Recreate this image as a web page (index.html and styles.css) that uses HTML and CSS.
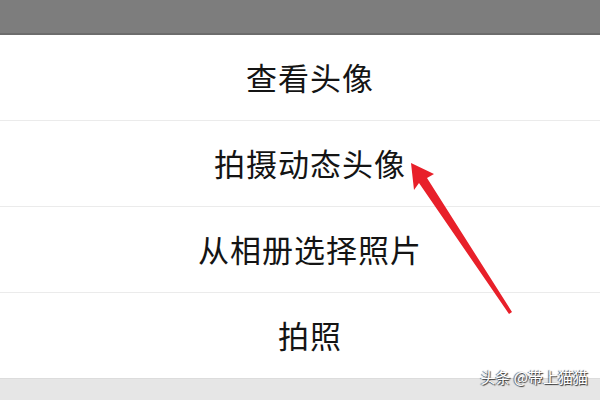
FILE: index.html
```html
<!DOCTYPE html>
<html lang="zh-CN">
<head>
  <meta charset="UTF-8">
  <meta name="viewport" content="width=device-width, initial-scale=1.0">
  <title>头像</title>
  <link rel="stylesheet" href="styles.css">
</head>
<body>
  <div class="screen">
    <div class="mask"></div>
    <ul class="sheet">
      <li class="sheet-item">查看头像</li>
      <li class="sheet-item">拍摄动态头像</li>
      <li class="sheet-item">从相册选择照片</li>
      <li class="sheet-item">拍照</li>
    </ul>
    <div class="gap"></div>

    <svg class="arrow" width="600" height="400" viewBox="0 0 600 400">
      <polygon fill="#e8202a" points="411,163 434,174 427,178 512,312 509,314 419,183 414,190"/>
    </svg>
    <div class="watermark">头条 @带上猫猫</div>
  </div>
</body>
</html>
```

FILE: styles.css
```css
body {
  margin: 0;
  padding: 0;
  font-family: "Noto Sans CJK SC", "Noto Sans", sans-serif;
  background: #fff;
}

.screen {
  position: relative;
  width: 600px;
  height: 400px;
  overflow: hidden;
  display: flex;
  flex-direction: column;
}

.mask {
  height: 33px;
  background: #7d7d7d;
  border-bottom: 2px solid #6c6c6c;
}

.sheet {
  list-style: none;
  margin: 0;
  padding: 0;
  background: #fff;
}

.sheet-item {
  height: 86px;
  box-sizing: border-box;
  padding: 0 0 3px 20px;
  display: flex;
  align-items: center;
  justify-content: center;
  font-size: 31px;
  letter-spacing: 1px;
  color: #141414;
  border-bottom: 1px solid #ebebeb;
}

.sheet-item:last-child {
  height: 85px;
  border-bottom: none;
}

.gap {
  flex: 1;
  background: #e6e6e6;
  border-top: 1px solid #dcdcdc;
}

.arrow {
  position: absolute;
  left: 0;
  top: 0;
}

.watermark {
  position: absolute;
  right: 12px;
  top: 366px;
  font-size: 15px;
  color: #fff;
  text-shadow: 1px 1px 1px #333, -1px 0 1px #555;
}
```
